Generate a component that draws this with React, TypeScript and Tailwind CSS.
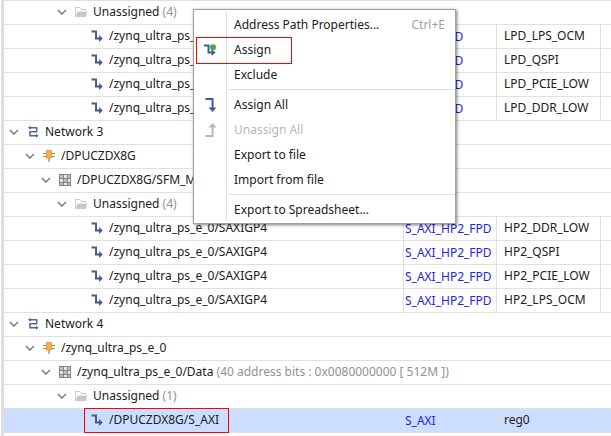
import type { ReactNode } from "react";

type IconName = "network" | "cell" | "grid" | "folder" | "path";

type Row = {
  level: number;
  icon: IconName;
  name: string;
  note?: string;
  intf?: string;
  segment?: string;
  selected?: boolean;
};

const MASTER = "/zynq_ultra_ps_e_0/SAXIGP4";

const rows: Row[] = [
  { level: 3, icon: "folder", name: "Unassigned", note: "(4)" },
  { level: 4, icon: "path", name: MASTER, intf: "S_AXI_LPD", segment: "LPD_LPS_OCM" },
  { level: 4, icon: "path", name: MASTER, intf: "S_AXI_LPD", segment: "LPD_QSPI" },
  { level: 4, icon: "path", name: MASTER, intf: "S_AXI_LPD", segment: "LPD_PCIE_LOW" },
  { level: 4, icon: "path", name: MASTER, intf: "S_AXI_LPD", segment: "LPD_DDR_LOW" },
  { level: 0, icon: "network", name: "Network 3" },
  { level: 1, icon: "cell", name: "/DPUCZDX8G" },
  { level: 2, icon: "grid", name: "/DPUCZDX8G/SFM_M_AXI" },
  { level: 3, icon: "folder", name: "Unassigned", note: "(4)" },
  { level: 4, icon: "path", name: MASTER, intf: "S_AXI_HP2_FPD", segment: "HP2_DDR_LOW" },
  { level: 4, icon: "path", name: MASTER, intf: "S_AXI_HP2_FPD", segment: "HP2_QSPI" },
  { level: 4, icon: "path", name: MASTER, intf: "S_AXI_HP2_FPD", segment: "HP2_PCIE_LOW" },
  { level: 4, icon: "path", name: MASTER, intf: "S_AXI_HP2_FPD", segment: "HP2_LPS_OCM" },
  { level: 0, icon: "network", name: "Network 4" },
  { level: 1, icon: "cell", name: "/zynq_ultra_ps_e_0" },
  { level: 2, icon: "grid", name: "/zynq_ultra_ps_e_0/Data", note: "(40 address bits : 0x0080000000 [ 512M ])" },
  { level: 3, icon: "folder", name: "Unassigned", note: "(1)" },
  { level: 4, icon: "path", name: "/DPUCZDX8G/S_AXI", intf: "S_AXI", segment: "reg0", selected: true },
];

const indents = ["pl-[2px]", "pl-[18px]", "pl-[34px]", "pl-[50px]", "pl-[66px]"];

function TreeIcon({ name }: { name: IconName }) {
  return (
    <svg className="size-3.5 shrink-0" viewBox="0 0 14 14" fill="none" aria-hidden="true">
      {name === "network" && (
        <>
          <path d="M3.5 2.8H10.7V6.8H4V10.8H10.5" stroke="#526796" strokeWidth="1.5" />
          <path d="M2 2.8L4.5 .8V4.8ZM12.5 10.8L10 8.8V12.8Z" fill="#526796" />
        </>
      )}
      {name === "cell" && (
        <>
          <path d="M1 4.5H13M1 7.5H13M7 8V13" stroke="#8c8c8c" strokeWidth="1.2" />
          <path d="M4.5 1.5H9.5V9H4.5Z" fill="#fbb034" stroke="#e0a33a" strokeWidth="1" />
        </>
      )}
      {name === "grid" && (
        <>
          <path d="M1 1H13V13H1Z" fill="#858585" />
          <path d="M2 2H5V5H2ZM10 2H12V5H10ZM6 6H9V9H6ZM2 10H5V12H2ZM10 10H12V12H10Z" fill="#bdbdbd" />
          <path d="M6 2H9V5H6ZM2 6H5V9H2ZM10 6H12V9H10ZM6 10H9V12H6Z" fill="#e6e6e6" />
        </>
      )}
      {name === "folder" && (
        <>
          <path d="M1.5 11.5V2.5H5.5L7 4.5H11.5V6" stroke="#c6c6c6" />
          <path d="M3.8 6.5H13L12 12H1.5Z" fill="#c6c6c6" />
        </>
      )}
      {name === "path" && (
        <>
          <path d="M1.5 2.5H6V9.5H10" stroke="#435b92" strokeWidth="2" />
          <path d="M9 6L12.8 9.5L9 13Z" fill="#435b92" />
        </>
      )}
    </svg>
  );
}

function TreeRow({ row }: { row: Row }) {
  const line = "h-6 border-b border-[#e0e0e0] p-0";
  const leaf = row.icon === "path";
  return (
    <tr className={row.selected ? "bg-[#ccdeff]" : ""} aria-selected={!!row.selected}>
      <td colSpan={leaf ? 1 : 4} className={`${line} ${leaf ? "border-r" : ""}`}>
        <div className={`flex items-center gap-1 pb-0.5 whitespace-nowrap ${indents[row.level]}`}>
          {leaf ? (
            <span className="w-4 shrink-0" />
          ) : (
            <button type="button" aria-label={`Collapse ${row.name}`} className="size-4 shrink-0">
              <svg className="size-4" viewBox="0 0 16 16" fill="none" aria-hidden="true">
                <path d="M4 6L8 10L12 6" stroke="#707070" strokeWidth="1.3" />
              </svg>
            </button>
          )}
          <span className="relative flex items-center gap-[5px]">
            <TreeIcon name={row.icon} />
            <span>
              {row.name}
              {row.note && <span className="text-[#919191]"> {row.note}</span>}
            </span>
            {row.selected && (
              <span className="pointer-events-none absolute -top-1 -right-2.5 -bottom-[5px] -left-1.5 border border-[#ff0000]" />
            )}
          </span>
        </div>
      </td>
      {leaf && (
        <>
          <td className={`${line} border-r whitespace-nowrap text-[#2222ee]`}>
            <a href="#interface" className="block pt-px pl-px">{row.intf}</a>
          </td>
          <td className={`${line} border-r whitespace-nowrap`}>
            <span className="block pb-0.5 pl-[7px]">{row.segment}</span>
          </td>
          <td className={line} />
        </>
      )}
    </tr>
  );
}

function MenuItem({ label, hint, icon, disabled, marked }: {
  label: string;
  hint?: string;
  icon?: ReactNode;
  disabled?: boolean;
  marked?: boolean;
}) {
  return (
    <button
      type="button"
      role="menuitem"
      disabled={disabled}
      className="relative flex h-[25px] w-full items-center whitespace-nowrap text-left disabled:text-[#b8b8b8]"
    >
      <span className="flex w-10 shrink-0 items-center pl-2">{icon}</span>
      <span className="grow">{label}</span>
      {hint && <span className="pr-2.5 text-[#a5a295]">{hint}</span>}
      {marked && (
        <span className="pointer-events-none absolute top-0 left-0.5 h-[27px] w-24 border border-[#ff0000]" />
      )}
    </button>
  );
}

function Separator() {
  return (
    <div role="separator" className="py-0.5 pl-[35px]">
      <div className="h-px bg-[#dedede]" />
    </div>
  );
}

function ContextMenu() {
  return (
    <div
      role="menu"
      className="absolute top-[9px] left-[193px] w-[263px] border border-[#a0a0a0] bg-white pt-0.5 pb-px shadow-[1px_1px_3px_rgba(0,0,0,0.5)]"
    >
      <div className="absolute inset-y-0.5 left-8 w-px bg-[#dedede]" />
      <MenuItem label="Address Path Properties..." hint="Ctrl+E" />
      <MenuItem
        label="Assign"
        marked
        icon={
          <svg className="size-4" viewBox="0 0 16 16" fill="none" aria-hidden="true">
            <path d="M2 3.5H6.5V10.5H10" stroke="#435b92" strokeWidth="2" />
            <path d="M9.5 7L13.5 10.5L9.5 14Z" fill="#435b92" />
            <circle cx="11" cy="5.2" r="3" fill="#3cb04a" />
          </svg>
        }
      />
      <MenuItem label="Exclude" />
      <Separator />
      <MenuItem
        label="Assign All"
        icon={
          <svg className="size-4" viewBox="0 0 16 16" fill="none" aria-hidden="true">
            <path d="M3.5 2H10.5V11" stroke="#435b92" strokeWidth="2" />
            <path d="M6.5 10.5H14.5L10.5 15Z" fill="#435b92" />
          </svg>
        }
      />
      <MenuItem
        label="Unassign All"
        disabled
        icon={
          <svg className="size-4" viewBox="0 0 16 16" fill="none" aria-hidden="true">
            <path d="M3.5 14H10.5V5" stroke="#b8b8b8" strokeWidth="2" />
            <path d="M6.5 5.5H14.5L10.5 1Z" fill="#b8b8b8" />
          </svg>
        }
      />
      <MenuItem label="Export to file" />
      <MenuItem label="Import from file" />
      <Separator />
      <MenuItem label="Export to Spreadsheet..." />
    </div>
  );
}

export default function App() {
  return (
    <main className="relative overflow-hidden bg-white pl-px font-['Noto_Sans',sans-serif] text-[12px] leading-4 text-[#202020]">
      <div className="border-l-3 border-[#dedede] pb-1">
        <table className="w-full table-fixed border-separate border-spacing-0 border-t border-[#e0e0e0]">
          <colgroup>
            <col className="w-[400px]" />
            <col className="w-[93px]" />
            <col className="w-[104px]" />
            <col />
          </colgroup>
          <tbody>
            {rows.map((row, i) => (
              <TreeRow key={i} row={row} />
            ))}
          </tbody>
        </table>
      </div>
      <ContextMenu />
    </main>
  );
}
